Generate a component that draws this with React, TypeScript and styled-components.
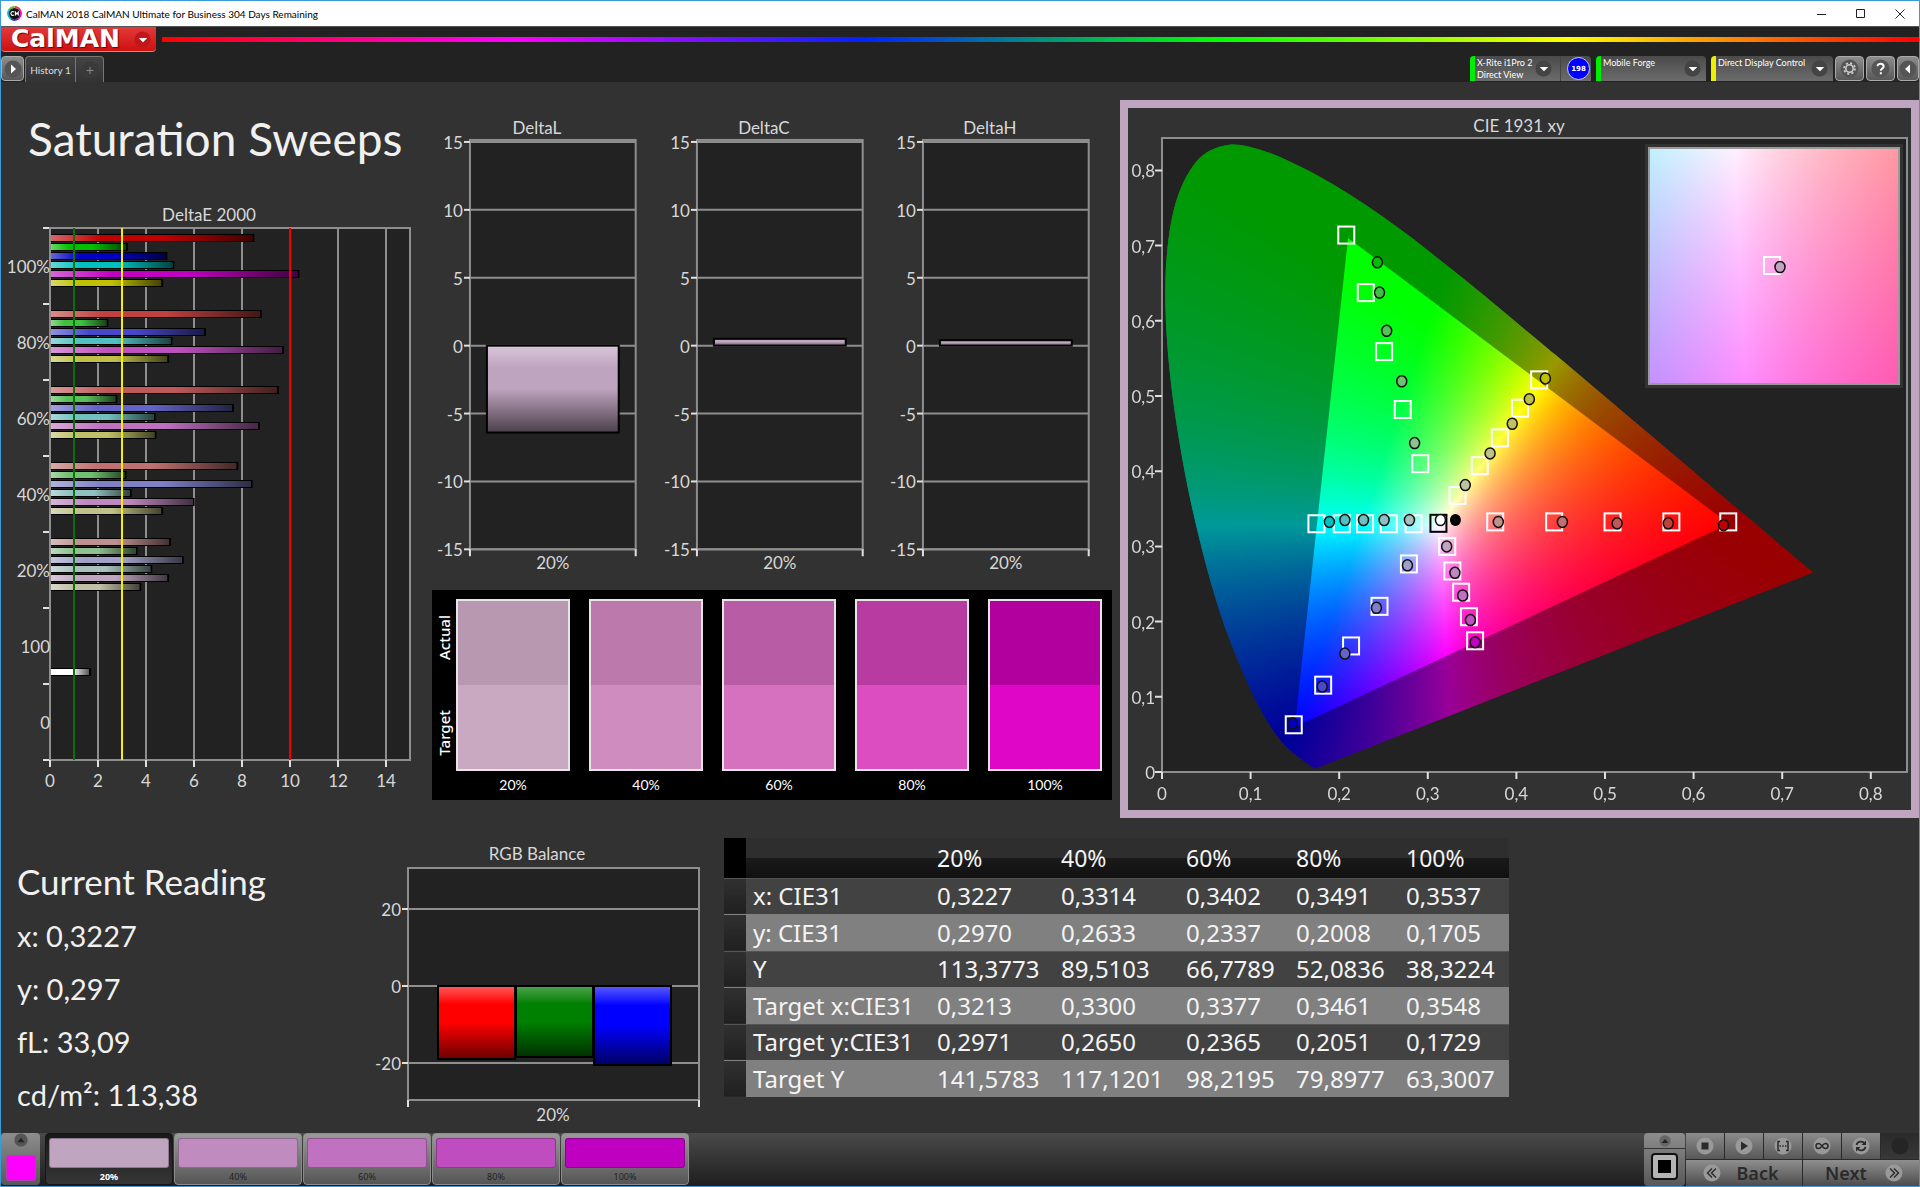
import React, { useEffect, useRef } from 'react';
import styled, { createGlobalStyle } from 'styled-components';

const GlobalStyle = createGlobalStyle`
  *, *::before, *::after { box-sizing: border-box; }
  body { margin: 0; background: #323232; }
  h1, h2, p { margin: 0; font-weight: 400; }
  button { font: inherit; color: inherit; padding: 0; border: 0; cursor: pointer; }
`;

const humanist = "Lato, 'Open Sans', sans-serif";
const ui = "'Noto Sans', 'Open Sans', sans-serif";
const panelGrey = 'linear-gradient(#8d8d8d, #585858)';

/* ---------- shell ---------- */

const Shell = styled.div`
  min-height: 100vh;
  display: flex;
  flex-direction: column;
  border: 1px solid #3a9bdc;
  background: #323232;
  color: #d9d9d9;
  font-family: ${humanist};
`;

const TitleBar = styled.header`
  display: flex;
  align-items: center;
  height: 25px;
  padding-left: 6px;
  background: #fff;
  color: #000;
  font: 10px/16px ${humanist};
`;
const AppName = styled.span`
  flex: 1;
  margin-left: 4px;
`;
const WindowButton = styled.button`
  display: grid;
  place-items: center;
  width: 39px;
  height: 24px;
  background: none;
`;

const TopBar = styled.div`
  background: #222;
  border-top: 1px solid #555;
`;
const BrandRow = styled.div`
  display: flex;
  align-items: flex-start;
  height: 29px;
`;
const Brand = styled.button`
  display: flex;
  align-items: center;
  justify-content: space-between;
  width: 155px;
  height: 25px;
  padding: 0 5px 0 10px;
  border-bottom: 1px solid #a99;
  border-radius: 0 0 4px 4px;
  background: linear-gradient(#e23a3a, #cf1010);
  color: #fff;
  font: 700 25px/24px 'DejaVu Sans', sans-serif;
  text-shadow: 1px 1px 1px #700;
`;
const Rainbow = styled.div`
  flex: 1;
  height: 5px;
  margin: 10px 0 0 6px;
  background: linear-gradient(90deg, #f00, #f0f, #02f, #0f0, #ff0, #f00);
`;

const TabRow = styled.nav`
  display: flex;
  align-items: flex-start;
  height: 26px;
`;
const SquareButton = styled.button<{ $w: number }>`
  display: grid;
  place-items: center;
  width: ${p => p.$w}px;
  height: 25px;
  border: 1px solid #aaa;
  border-radius: 4px;
  background: ${panelGrey};
  color: #fff;
`;
const Tabs = styled.div`
  display: flex;
  height: 26px;
  margin-left: 1px;
  border: 1px solid #777;
  border-bottom: 0;
  border-radius: 4px 4px 0 0;
  background: linear-gradient(#444, #333);
`;
const Tab = styled.button`
  width: 50px;
  height: 25px;
  border-right: 1px solid #777;
  background: none;
  color: #ddd;
  font: 10px/16px ${humanist};
  white-space: nowrap;
`;
const AddTab = styled(Tab)`
  display: grid;
  place-items: center;
  width: 27px;
  border-right: 0;
`;
const Spacer = styled.div`
  flex: 1;
`;
const Device = styled.button<{ $lamp: string; $w: number }>`
  display: flex;
  align-items: flex-start;
  justify-content: space-between;
  width: ${p => p.$w}px;
  height: 25px;
  margin-right: 5px;
  padding: 0 5px 0 2px;
  border-left: 5px solid ${p => p.$lamp};
  border-radius: 4px 4px 0 0;
  background: linear-gradient(#4a4a4a, #6c6c6c);
  color: #fff;
  text-align: left;
  font: 9px/12px ${humanist};
  white-space: nowrap;
`;
const DeviceName = styled.span`
  padding-top: 1px;
`;
const Arrow = styled.span`
  display: grid;
  align-self: center;
`;
const MeterGroup = styled.div`
  display: flex;
  margin-right: 5px;
  border-radius: 4px 4px 0 0;
  background: linear-gradient(#4a4a4a, #6c6c6c);
`;
const MeterDevice = styled(Device)`
  margin: 0;
  padding-right: 8px;
  border-right: 1px solid #444;
  border-radius: 4px 0 0 0;
`;
const Badge = styled.span`
  display: grid;
  place-items: center;
  width: 23px;
  height: 23px;
  margin: 1px 1px 0 6px;
  border: 1px solid #ccd;
  border-radius: 50%;
  background: #00f;
  color: #fff;
  font: 700 7px/10px 'DejaVu Sans', sans-serif;
`;
const Tools = styled.div`
  display: flex;
  gap: 2px;
  margin-left: -3px;
`;

/* ---------- workspace ---------- */

const Workspace = styled.main`
  flex: 1;
`;
const TopGrid = styled.section`
  display: grid;
  grid-template-columns: minmax(0, 431fr) minmax(0, 688fr) minmax(0, 799fr);
  align-items: start;
`;
const Heading = styled.h1`
  padding: 24px 0 0 27px;
  font: 46px/66px ${humanist};
  color: #f0f0f0;
  white-space: nowrap;
`;
const SweepColumn = styled.div`
  display: flex;
  flex-direction: column;
  gap: 28px;
`;
const MiddleColumn = styled.div`
  padding: 31px 8px 0 0;
`;
const DeltaGrid = styled.div`
  display: grid;
  grid-template-columns: repeat(3, 1fr);
`;
const Chart = styled.svg`
  display: block;
  width: 100%;
  height: auto;
  font-family: ${humanist};
  font-size: 17px;
  fill: #d8d8d8;
`;

const SwatchPanel = styled.div`
  display: grid;
  grid-template-columns: 24px 1fr;
  height: 210px;
  margin-top: 10px;
  padding-top: 9px;
  background: #000;
  color: #fff;
`;
const SideLabels = styled.div`
  display: grid;
  grid-template-rows: 76px 116px;
  justify-items: center;
  align-items: center;
  font: 500 15px/20px ${ui};
`;
const SideLabel = styled.span`
  writing-mode: vertical-rl;
  transform: rotate(180deg);
`;
const Swatches = styled.div`
  display: grid;
  grid-template-columns: repeat(5, 1fr);
  gap: 19px;
  padding-right: 10px;
`;
const SwatchItem = styled.div`
  display: flex;
  flex-direction: column;
  align-items: center;
  gap: 4px;
  font-size: 14px;
  line-height: 20px;
`;
const SwatchPair = styled.div<{ $actual: string; $target: string }>`
  width: 100%;
  height: 172px;
  border: 2px solid #e8e4e8;
  background: linear-gradient(${p => p.$actual} 50%, ${p => p.$target} 50%);
`;

const CiePanel = styled.div`
  margin-top: 18px;
  border: 8px solid #c0a5c0;
`;
const FieldCanvas = styled.canvas`
  display: block;
`;

const BottomGrid = styled.section`
  display: grid;
  grid-template-columns: 369fr 353fr 1196fr;
  align-items: start;
`;
const Reading = styled.div`
  padding: 35px 0 0 16px;
  color: #f0f0f0;
  white-space: nowrap;
`;
const ReadingTitle = styled.h2`
  font-size: 35px;
  line-height: 56px;
`;
const ReadingLine = styled.p`
  padding-top: 1px;
  font-size: 29px;
  line-height: 52px;
`;
const RgbBox = styled.div`
  padding: 26px 22px 0 0;
`;
const TableBox = styled.div`
  padding: 20px 0 0 1px;
`;
const DataTable = styled.table`
  width: 785px;
  border-collapse: collapse;
  table-layout: fixed;
  color: #f4f4f4;
  font: 24px/28px ${ui};
  text-align: left;
`;
const HeadRow = styled.tr`
  height: 40px;
  background: linear-gradient(#2e2e2e 50%, #1a1a1a 50%, #111);
`;
const BodyRow = styled.tr<{ $alt: boolean }>`
  height: ${p => (p.$alt ? 37 : 36)}px;
  border-top: 1px solid ${p => (p.$alt ? '#808080' : '#555')};
  background: ${p => (p.$alt ? '#808080' : '#424242')};
`;
const HeadCell = styled.th`
  padding: 0 0 0 7px;
  font-size: 23px;
  font-weight: 400;
`;
const Corner = styled.th`
  padding: 0;
  background: #000;
`;
const Grip = styled.td`
  padding: 0;
  background: linear-gradient(#303030, #202020);
`;
const Cell = styled.td`
  padding: 0 0 0 7px;
  white-space: nowrap;
`;

/* ---------- bottom bar ---------- */

const BottomBar = styled.footer`
  display: flex;
  height: 53px;
  background: linear-gradient(#4a4a4a, #1e1e1e);
`;
const ColorPicker = styled.button`
  display: flex;
  flex-direction: column;
  align-items: center;
  gap: 8px;
  width: 39px;
  height: 52px;
  margin-right: 5px;
  border-radius: 4px;
  background: ${panelGrey};
`;
const PickedColor = styled.span`
  width: 30px;
  height: 26px;
  border: 1px solid #a4a;
  border-radius: 3px;
  background: #f0f;
`;
const Steps = styled.div`
  display: flex;
  gap: 1px;
`;
const Step = styled.button<{ $active: boolean }>`
  display: flex;
  flex-direction: column;
  align-items: center;
  gap: 2px;
  width: 128px;
  height: 52px;
  padding-top: 4px;
  border: 1px solid ${p => (p.$active ? '#161616' : '#8c8c8c')};
  border-radius: 4px;
  background: ${p => (p.$active ? 'linear-gradient(#181818, #363636)' : 'linear-gradient(#9a9a9a, #555)')};
  color: ${p => (p.$active ? '#fff' : '#222')};
  font: ${p => (p.$active ? 700 : 400)} 9px/14px ${ui};
`;
const StepColor = styled.span<{ $c: string }>`
  width: 120px;
  height: 31px;
  border: 1px solid #0004;
  border-radius: 3px;
  background: ${p => p.$c};
`;
const PatternBox = styled.div`
  display: flex;
  flex-direction: column;
  width: 41px;
  margin-right: 1px;
  border-radius: 4px;
  overflow: hidden;
  background: ${panelGrey};
`;
const PatternToggle = styled.button`
  display: grid;
  place-items: center;
  height: 16px;
  border-bottom: 1px solid #333;
  background: none;
`;
const PatternButton = styled.button`
  display: grid;
  place-items: center;
  width: 27px;
  height: 27px;
  margin: 4px auto 0;
  border: 2px solid #111;
  border-radius: 4px;
  background: #b4b4b4;
`;
const Transport = styled.div`
  display: grid;
  grid-template-columns: repeat(6, 38px);
  grid-template-rows: 26px 26px;
  gap: 1px;
  background: #2a2a2a;
`;
const TransportButton = styled.button`
  display: grid;
  place-items: center;
  background: linear-gradient(#8c8c8c, #585858);
  &:disabled { background: linear-gradient(#2a2a2a, #383838); }
`;
const NavButton = styled.button`
  grid-column: span 3;
  display: flex;
  align-items: center;
  justify-content: center;
  gap: 15px;
  padding-right: 6px;
  background: linear-gradient(#8f8f8f, #4c4c4c);
  color: #2a2a2a;
  font: 600 18px/24px ${ui};
`;
const NextButton = styled(NavButton)`
  gap: 18px;
  padding: 0 0 0 6px;
`;

/* ---------- small icons ---------- */

const Disc = ({ size = 18, fill = '#555', children }: { size?: number; fill?: string; children?: React.ReactNode }) => (
  <svg width={size} height={size} viewBox="0 0 18 18" aria-hidden="true">
    <circle cx="9" cy="9" r="8.5" fill={fill} />
    {children}
  </svg>
);
const DownArrow = ({ fill = '#444' }: { fill?: string }) => (
  <Arrow><Disc size={17} fill={fill}><path d="M5 7.5h9L9.5 12z" fill="#fff" /></Disc></Arrow>
);

/* ---------- data ---------- */

const names = ['red', 'green', 'blue', 'cyan', 'magenta', 'yellow'];
const shades: Record<string, string[]> = {
  '100%': ['#c00000', '#00c000', '#0000c0', '#00c0c0', '#c000c0', '#c0c000'],
  '80%': ['#c04040', '#40c040', '#4848c8', '#50c0c0', '#c050c0', '#c0c048'],
  '60%': ['#c05858', '#58c058', '#6464c8', '#70c0c0', '#c070c0', '#c0c068'],
  '40%': ['#c07070', '#70c070', '#8080c8', '#90c0c0', '#c088c0', '#c0c088'],
  '20%': ['#c09090', '#90c090', '#a0a0c8', '#a8c0c0', '#c0a5c0', '#c0c0a4'],
};
const deltaE: { label: string; values: number[] }[] = [
  { label: '100%', values: [8.47, 3.2, 4.85, 5.14, 10.35, 4.67] },
  { label: '80%', values: [8.78, 2.39, 6.45, 5.06, 9.71, 4.92] },
  { label: '60%', values: [9.5, 2.76, 7.62, 4.36, 8.7, 4.39] },
  { label: '40%', values: [7.8, 3.14, 8.4, 3.36, 5.98, 4.67] },
  { label: '20%', values: [5, 3.61, 5.53, 4.22, 4.92, 3.76] },
  { label: '100', values: [] },
  { label: '0', values: [] },
];

type XY = [number, number];
const levels = ['100%', '80%', '60%', '40%', '20%'];
const targets: Record<string, XY[]> = {
  green: [[0.208, 0.714], [0.23, 0.6375], [0.2507, 0.559], [0.2717, 0.482], [0.2915, 0.41]],
  yellow: [[0.4257, 0.5215], [0.4041, 0.4838], [0.3813, 0.4443], [0.3586, 0.4073], [0.3335, 0.3677]],
  cyan: [[0.1743, 0.3301], [0.2029, 0.3301], [0.2292, 0.3301], [0.256, 0.3301], [0.284, 0.3301]],
  red: [[0.6391, 0.3326], [0.5749, 0.3326], [0.5085, 0.3326], [0.4426, 0.3326], [0.3761, 0.3326]],
  magenta: [[0.3534, 0.1745], [0.3464, 0.2065], [0.3376, 0.2391], [0.3277, 0.2673], [0.3219, 0.3]],
  blue: [[0.1487, 0.0628], [0.1819, 0.1155], [0.2134, 0.1676], [0.2455, 0.2203], [0.2787, 0.2767]],
};
const actuals: Record<string, XY[]> = {
  green: [[0.2431, 0.6777], [0.2455, 0.6375], [0.2536, 0.5867], [0.2706, 0.5196], [0.2851, 0.4374]],
  yellow: [[0.4327, 0.5234], [0.4146, 0.4958], [0.3953, 0.4631], [0.3703, 0.4236], [0.3423, 0.3815]],
  cyan: [[0.1889, 0.3326], [0.2064, 0.3351], [0.2274, 0.3351], [0.2507, 0.3351], [0.2793, 0.3351]],
  red: [[0.6338, 0.3282], [0.5714, 0.3307], [0.5137, 0.3307], [0.4519, 0.3326], [0.3796, 0.3326]],
  magenta: [[0.3534, 0.1726], [0.3481, 0.2021], [0.3394, 0.2347], [0.3306, 0.2648], [0.3213, 0.3]],
  blue: [[0.1475, 0.0646], [0.1808, 0.1136], [0.2064, 0.1575], [0.242, 0.2184], [0.277, 0.2749]],
};

const locus: XY[] = [
  [0.1741, 0.005], [0.1726, 0.0048], [0.1714, 0.0051], [0.1689, 0.0069], [0.1644, 0.0109], [0.1566, 0.0177],
  [0.151, 0.0227], [0.144, 0.0297], [0.1355, 0.0399], [0.1241, 0.0578], [0.1096, 0.0868], [0.0913, 0.1327],
  [0.0687, 0.2007], [0.0454, 0.295], [0.0235, 0.4127], [0.0082, 0.5384], [0.0039, 0.6548], [0.0139, 0.7502],
  [0.0389, 0.812], [0.0743, 0.8338], [0.1142, 0.8262], [0.1547, 0.8059], [0.1929, 0.7816], [0.2296, 0.7543],
  [0.2658, 0.7243], [0.3016, 0.6923], [0.3373, 0.6589], [0.3731, 0.6245], [0.4441, 0.5547], [0.5125, 0.4866],
  [0.5752, 0.4242], [0.627, 0.3725], [0.6658, 0.334], [0.6915, 0.3083], [0.719, 0.2809], [0.7347, 0.2653],
];
const gamut: XY[] = [[0.64, 0.33], [0.21, 0.71], [0.15, 0.06]];

const table = {
  columns: ['20%', '40%', '60%', '80%', '100%'],
  rows: [
    ['x: CIE31', '0,3227', '0,3314', '0,3402', '0,3491', '0,3537'],
    ['y: CIE31', '0,2970', '0,2633', '0,2337', '0,2008', '0,1705'],
    ['Y', '113,3773', '89,5103', '66,7789', '52,0836', '38,3224'],
    ['Target x:CIE31', '0,3213', '0,3300', '0,3377', '0,3461', '0,3548'],
    ['Target y:CIE31', '0,2971', '0,2650', '0,2365', '0,2051', '0,1729'],
    ['Target Y', '141,5783', '117,1201', '98,2195', '79,8977', '63,3007'],
  ],
};

const swatches = [
  { label: '20%', actual: '#b897b0', target: '#c9a8c1' },
  { label: '40%', actual: '#bb7aab', target: '#cf8cbf' },
  { label: '60%', actual: '#b75ca5', target: '#d671c0' },
  { label: '80%', actual: '#b83ba1', target: '#dc4dc2' },
  { label: '100%', actual: '#b2009e', target: '#e006c8' },
];
const steps = [
  { label: '20%', color: '#c0a5c0' },
  { label: '40%', color: '#c08cc0' },
  { label: '60%', color: '#c071c0' },
  { label: '80%', color: '#c04dc0' },
  { label: '100%', color: '#c000c0' },
];

/* ---------- charts ---------- */

const line = '#8e8e8e';
const tick = '#e0e0e0';

function DeltaEChart() {
  const left = 49, top = 28, unit = 24, group = 76, pitch = 9;
  const right = left + unit * 15, bottom = top + group * 7;
  const x = (v: number) => left + v * unit;
  return (
    <Chart viewBox="0 0 431 600" role="img" aria-label="DeltaE 2000">
      <defs>
        <linearGradient id="barShade">
          <stop offset="0" stopColor="#fff" stopOpacity="0.4" />
          <stop offset="0.25" stopColor="#fff" stopOpacity="0" />
          <stop offset="0.55" stopColor="#000" stopOpacity="0" />
          <stop offset="1" stopColor="#000" stopOpacity="0.65" />
        </linearGradient>
      </defs>
      <text x="208" y="21" textAnchor="middle">DeltaE 2000</text>
      <rect x={left} y={top} width={right - left} height={bottom - top} fill="#222" stroke={line} strokeWidth="2" />
      {[2, 4, 6, 8, 10, 12, 14].map(v => <path key={v} d={`M${x(v)} ${top}V${bottom}`} stroke={line} strokeWidth="2" />)}
      {[0, 2, 4, 6, 8, 10, 12, 14].map(v => (
        <g key={v}>
          <path d={`M${x(v)} ${bottom}v7`} stroke={tick} strokeWidth="2" />
          <text x={x(v)} y={bottom + 27} textAnchor="middle">{v}</text>
        </g>
      ))}
      {[0, 1, 2, 3, 4, 5, 6, 7].map(i => <path key={i} d={`M${left - 7} ${top + i * group}h6`} stroke={tick} strokeWidth="2" />)}
      {deltaE.map((g, gi) => (
        <g key={g.label}>
          <text x={left} y={top + gi * group + 45} textAnchor="end">{g.label}</text>
          {g.values.map((v, i) => (
            <g key={names[i]}>
              <rect x={left + 1} y={top + gi * group + 6 + i * pitch} width={v * unit} height="8" fill="#000" />
              <rect x={left + 1} y={top + gi * group + 7 + i * pitch} width={v * unit - 2} height="6" fill={shades[g.label][i]} />
              <rect x={left + 1} y={top + gi * group + 7 + i * pitch} width={v * unit - 2} height="6" fill="url(#barShade)" />
            </g>
          ))}
        </g>
      ))}
      <rect x={left + 1} y={top + 5 * group + 60} width="40" height="8" fill="#000" />
      <rect x={left + 1} y={top + 5 * group + 61} width="38" height="6" fill="#fff" />
      <rect x={left + 1} y={top + 5 * group + 61} width="38" height="6" fill="url(#barShade)" />
      <path d={`M${x(1)} ${top}V${bottom}`} stroke="#0a6e0a" strokeWidth="2" />
      <path d={`M${x(3)} ${top}V${bottom}`} stroke="#f4f000" strokeWidth="2" />
      <path d={`M${x(10)} ${top}V${bottom}`} stroke="#f00000" strokeWidth="2" />
    </Chart>
  );
}

function DeltaChart({ title, value }: { title: string; value: number }) {
  const y = (v: number) => 233 - v * 13.6;
  const id = `shade-${title}`;
  const top = Math.min(y(value), y(0));
  const height = Math.abs(y(value) - y(0));
  return (
    <Chart viewBox="0 0 227 468" role="img" aria-label={title}>
      <defs>
        <linearGradient id={id} x2="0" y2="1">
          <stop offset="0" stopColor="#d8c6d8" />
          <stop offset="0.25" stopColor="#c0a5c0" />
          <stop offset="0.5" stopColor="#bda3bd" />
          <stop offset="1" stopColor="#4c404c" />
        </linearGradient>
      </defs>
      <text x="105" y="21" textAnchor="middle">{title}</text>
      <rect x="38" y="27" width="166" height="410" fill="#222" stroke={line} strokeWidth="2" />
      {[15, 10, 5, 0, -5, -10, -15].map(v => (
        <g key={v}>
          <path d={`M38 ${y(v)}H204`} stroke={line} strokeWidth="2" />
          <path d={`M32 ${y(v)}h6`} stroke={tick} strokeWidth="2" />
          <text x="31" y={y(v) + 7} textAnchor="end">{v}</text>
        </g>
      ))}
      <path d="M38 437v7M204 437v7" stroke={tick} strokeWidth="2" />
      <rect x="55" y={top} width="132" height={height} fill={`url(#${id})`} stroke="#000" strokeWidth="2" />
      <text x="121" y="457" textAnchor="middle">20%</text>
    </Chart>
  );
}

function RgbChart() {
  const bars: [string, string, string, number][] = [
    ['#ff5c5c', '#ff0000', '#6a0000', 73],
    ['#4fa34f', '#008000', '#003000', 71],
    ['#5c5cff', '#0000ff', '#000060', 79],
  ];
  return (
    <Chart viewBox="0 -10 331 286" role="img" aria-label="RGB Balance">
      <defs>
        {bars.map(([a, b, c], i) => (
          <linearGradient key={i} id={`rgb${i}`} x2="0" y2="1">
            <stop offset="0" stopColor={a} />
            <stop offset="0.25" stopColor={b} />
            <stop offset="0.5" stopColor={b} />
            <stop offset="1" stopColor={c} />
          </linearGradient>
        ))}
      </defs>
      <text x="167" y="6" textAnchor="middle">RGB Balance</text>
      <rect x="38" y="14" width="291" height="232" fill="#222" stroke={line} strokeWidth="2" />
      {[20, 0, -20].map(v => (
        <g key={v}>
          <path d={`M38 ${132 - v * 3.85}H329`} stroke={line} strokeWidth="2" />
          <path d={`M32 ${132 - v * 3.85}h6`} stroke={tick} strokeWidth="2" />
          <text x="31" y={139 - v * 3.85} textAnchor="end">{v}</text>
        </g>
      ))}
      <path d="M38 246v7M329 246v7" stroke={tick} strokeWidth="2" />
      {bars.map((b, i) => (
        <rect key={i} x={68 + i * 78} y="132" width="77" height={b[3]} fill={`url(#rgb${i})`} stroke="#000" strokeWidth="2" />
      ))}
      <text x="183" y="267" textAnchor="middle">20%</text>
    </Chart>
  );
}

/* Colour of a chromaticity, scaled so its brightest channel is full. */
function chroma(x: number, y: number): [number, number, number] {
  const z = 1 - x - y;
  const rgb = [
    3.2406 * x - 1.5372 * y - 0.4986 * z,
    -0.9689 * x + 1.8758 * y + 0.0415 * z,
    0.0557 * x - 0.204 * y + 1.057 * z,
  ].map(v => Math.max(0, v));
  const m = Math.max(...rgb) || 1;
  return [(rgb[0] / m) * 255, (rgb[1] / m) * 255, (rgb[2] / m) * 255];
}

function field(w: number, h: number, at: (px: number, py: number) => XY) {
  const c = document.createElement('canvas');
  c.width = w;
  c.height = h;
  const ctx = c.getContext('2d')!;
  const img = ctx.createImageData(w, h);
  for (let j = 0; j < h; j++) {
    for (let i = 0; i < w; i++) {
      const [x, y] = at(i, j);
      const rgb = chroma(x, y);
      const k = (j * w + i) * 4;
      img.data[k] = rgb[0];
      img.data[k + 1] = rgb[1];
      img.data[k + 2] = rgb[2];
      img.data[k + 3] = 255;
    }
  }
  ctx.putImageData(img, 0, 0);
  return c;
}

const SX = 886, SY = 752, PW = 745, PH = 634;

function GamutField() {
  const ref = useRef<HTMLCanvasElement>(null);
  useEffect(() => {
    const ctx = ref.current!.getContext('2d')!;
    const colors = field(PW, PH, (i, j) => [i / SX, Math.max((PH - j) / SY, 0.0001)]);
    const trace = (pts: XY[]) => {
      ctx.beginPath();
      pts.forEach(([x, y]) => ctx.lineTo(x * SX, PH - y * SY));
      ctx.closePath();
    };
    const smooth = (pts: XY[]) => {
      const p = pts.map(([x, y]) => [x * SX, PH - y * SY]);
      ctx.beginPath();
      ctx.moveTo(p[0][0], p[0][1]);
      for (let i = 0; i < p.length - 1; i++) {
        const a = p[Math.max(0, i - 1)], b = p[i], c = p[i + 1], d = p[Math.min(p.length - 1, i + 2)];
        ctx.bezierCurveTo(
          b[0] + (c[0] - a[0]) / 6, b[1] + (c[1] - a[1]) / 6,
          c[0] - (d[0] - b[0]) / 6, c[1] - (d[1] - b[1]) / 6,
          c[0], c[1],
        );
      }
      ctx.closePath();
    };
    ctx.clearRect(0, 0, PW, PH);
    ctx.save();
    smooth(locus);
    ctx.clip();
    ctx.drawImage(colors, 0, 0);
    ctx.fillStyle = 'rgba(0,0,0,0.4)';
    ctx.fillRect(0, 0, PW, PH);
    ctx.restore();
    ctx.save();
    trace(gamut);
    ctx.clip();
    ctx.drawImage(colors, 0, 0);
    ctx.restore();
  }, []);
  return <FieldCanvas ref={ref} width={PW} height={PH} />;
}

function InsetField() {
  const ref = useRef<HTMLCanvasElement>(null);
  useEffect(() => {
    const ctx = ref.current!.getContext('2d')!;
    ctx.drawImage(field(252, 238, (i, j) => [0.3213 + (i - 124) * 0.00022, 0.2971 - (j - 118) * 0.00022]), 0, 0);
  }, []);
  return <FieldCanvas ref={ref} width={252} height={238} />;
}

function CieChart() {
  const px = (x: number) => 34 + x * SX;
  const py = (y: number) => 664 - y * SY;
  const marks = [0, 1, 2, 3, 4, 5, 6, 7, 8];
  const label = (i: number) => (i ? `0,${i}` : '0');
  return (
    <Chart viewBox="0 0 783 702" role="img" aria-label="CIE 1931 xy">
      <text x="391" y="24" textAnchor="middle">CIE 1931 xy</text>
      <rect x="34" y="30" width={PW} height={PH} fill="#222" />
      <foreignObject x="34" y="30" width={PW} height={PH}><GamutField /></foreignObject>
      <rect x="34" y="30" width={PW} height={PH} fill="none" stroke={line} strokeWidth="2" />
      {marks.map(i => (
        <g key={i}>
          <path d={`M27 ${py(i / 10)}h7M${px(i / 10)} 664v7`} stroke={tick} strokeWidth="2" />
          <text x="27" y={py(i / 10) + 7} textAnchor="end">{label(i)}</text>
          <text x={px(i / 10)} y="692" textAnchor="middle">{label(i)}</text>
        </g>
      ))}
      {Object.entries(targets).map(([name, pts]) => pts.map(([x, y], i) => (
        <rect key={name + i} x={px(x) - 8} y={py(y) - 8.5} width="16" height="17" fill="none" stroke="#fff" strokeWidth="2" />
      )))}
      <rect x={px(0.312) - 8} y={py(0.3307) - 8.5} width="16" height="17" fill="none" stroke="#000" strokeWidth="2" />
      {Object.entries(actuals).map(([name, pts]) => pts.map(([x, y], i) => (
        <ellipse key={name + i} cx={px(x)} cy={py(y)} rx="5" ry="5.5" fill={shades[levels[i]][names.indexOf(name)]} stroke="#111" strokeWidth="1.5" />
      )))}
      <ellipse cx={px(0.3143)} cy={py(0.3351)} rx="5" ry="5.5" fill="#fff" stroke="#111" strokeWidth="1.5" />
      <ellipse cx={px(0.3312)} cy={py(0.3351)} rx="5.5" ry="6" fill="#000" />
      <rect x="517" y="36" width="258" height="244" fill="#323232" />
      <foreignObject x="520" y="39" width="252" height="238"><InsetField /></foreignObject>
      <rect x="521" y="40" width="250" height="236" fill="none" stroke="#9a9a9a" strokeWidth="2" />
      <rect x="636" y="149" width="16" height="17" fill="none" stroke="#fff" strokeWidth="2" />
      <ellipse cx="652" cy="159" rx="5" ry="5.5" fill="#c0a5c0" stroke="#111" strokeWidth="1.5" />
    </Chart>
  );
}

/* ---------- page ---------- */

export default function App() {
  return (
    <Shell>
      <GlobalStyle />
      <TitleBar>
        <svg width="15" height="15" viewBox="0 0 16 16" aria-hidden="true">
          <path d="M8 1a7 7 0 0 1 6 3.5" stroke="#f33" strokeWidth="2" fill="none" />
          <path d="M14 4.500a7 7 0 0 1-2 9" stroke="#e0c" strokeWidth="2" fill="none" />
          <path d="M12 13.500a7 7 0 0 1-8 0" stroke="#33f" strokeWidth="2" fill="none" />
          <path d="M4 13.500a7 7 0 0 1-2-9" stroke="#0bd" strokeWidth="2" fill="none" />
          <path d="M2 4.500A7 7 0 0 1 8 1" stroke="#5c2" strokeWidth="2" fill="none" />
          <circle cx="8" cy="8" r="6" fill="#111" />
          <path d="M7.500 6.500a2 2 0 1 0 0 3M9 10V6.500l1.500 2 1.500-2V10" stroke="#fff" strokeWidth="1.200" fill="none" />
        </svg>
        <AppName>CalMAN 2018 CalMAN Ultimate for Business 304 Days Remaining</AppName>
        <WindowButton aria-label="Minimize"><svg width="10" height="10"><path d="M0 5.500h9" stroke="#222" /></svg></WindowButton>
        <WindowButton aria-label="Maximize"><svg width="10" height="10"><path d="M.5.500h8v8h-8z" fill="none" stroke="#222" /></svg></WindowButton>
        <WindowButton aria-label="Close"><svg width="10" height="10"><path d="M.5.500l9 9M9.500.500l-9 9" stroke="#222" /></svg></WindowButton>
      </TitleBar>

      <TopBar>
        <BrandRow>
          <Brand>CalMAN<DownArrow fill="#c01818" /></Brand>
          <Rainbow />
        </BrandRow>
        <TabRow>
          <SquareButton $w={23} aria-label="Expand"><Disc><path d="M7 4.500v9l5-4.500z" fill="#fff" /></Disc></SquareButton>
          <Tabs>
            <Tab>History 1</Tab>
            <AddTab aria-label="Add tab"><Disc fill="#3a3a3a"><path d="M9 6v7M5.500 9.500h7" stroke="#888" /></Disc></AddTab>
          </Tabs>
          <Spacer />
          <MeterGroup>
            <MeterDevice $lamp="#0e0" $w={91}><DeviceName>X-Rite i1Pro 2<br />Direct View</DeviceName><DownArrow /></MeterDevice>
            <Badge>198</Badge>
          </MeterGroup>
          <Device $lamp="#0e0" $w={110}><DeviceName>Mobile Forge</DeviceName><DownArrow /></Device>
          <Device $lamp="#ee0" $w={122}><DeviceName>Direct Display Control</DeviceName><DownArrow /></Device>
          <Tools>
            <SquareButton $w={29} aria-label="Settings">
              <Disc size={19}>
                <circle cx="9" cy="9" r="3.500" fill="none" stroke="#ccc" strokeWidth="1.500" />
                <circle cx="9" cy="9" r="5.200" fill="none" stroke="#ccc" strokeWidth="1.600" strokeDasharray="2 2.080" />
              </Disc>
            </SquareButton>
            <SquareButton $w={29} aria-label="Help">
              <Disc size={19}><path d="M6.200 6.800C6.200 3.500 12 3.600 12 7c0 2-2.700 2-2.700 4.200M9.300 12.500v2" stroke="#fff" strokeWidth="1.900" fill="none" /></Disc>
            </SquareButton>
            <SquareButton $w={22} aria-label="Collapse"><Disc><path d="M11 4.500v9L6 9z" fill="#fff" /></Disc></SquareButton>
          </Tools>
        </TabRow>
      </TopBar>

      <Workspace>
        <TopGrid>
          <SweepColumn>
            <Heading>Saturation Sweeps</Heading>
            <DeltaEChart />
          </SweepColumn>
          <MiddleColumn>
            <DeltaGrid>
              <DeltaChart title="DeltaL" value={-6.4} />
              <DeltaChart title="DeltaC" value={0.5} />
              <DeltaChart title="DeltaH" value={0.4} />
            </DeltaGrid>
            <SwatchPanel>
              <SideLabels><SideLabel>Actual</SideLabel><SideLabel>Target</SideLabel></SideLabels>
              <Swatches>
                {swatches.map(s => (
                  <SwatchItem key={s.label}><SwatchPair $actual={s.actual} $target={s.target} />{s.label}</SwatchItem>
                ))}
              </Swatches>
            </SwatchPanel>
          </MiddleColumn>
          <CiePanel><CieChart /></CiePanel>
        </TopGrid>

        <BottomGrid>
          <Reading>
            <ReadingTitle>Current Reading</ReadingTitle>
            <ReadingLine>x: 0,3227</ReadingLine>
            <ReadingLine>y: 0,297</ReadingLine>
            <ReadingLine>fL: 33,09</ReadingLine>
            <ReadingLine>cd/m²: 113,38</ReadingLine>
          </Reading>
          <RgbBox><RgbChart /></RgbBox>
          <TableBox>
            <DataTable>
              <colgroup>
                <col width="22" /><col width="184" /><col width="124" /><col width="125" /><col width="110" /><col width="110" /><col width="110" />
              </colgroup>
              <thead>
                <HeadRow><Corner /><HeadCell />{table.columns.map(c => <HeadCell key={c} scope="col">{c}</HeadCell>)}</HeadRow>
              </thead>
              <tbody>
                {table.rows.map((r, i) => (
                  <BodyRow key={r[0]} $alt={i % 2 === 1}>
                    <Grip />
                    {r.map((v, j) => <Cell key={j}>{v}</Cell>)}
                  </BodyRow>
                ))}
              </tbody>
            </DataTable>
          </TableBox>
        </BottomGrid>
      </Workspace>

      <BottomBar>
        <ColorPicker aria-label="Pick colour">
          <Disc size={14}><path d="M4.500 12L9 6l4.500 6z" fill="#222" /></Disc>
          <PickedColor />
        </ColorPicker>
        <Steps>
          {steps.map((s, i) => (
            <Step key={s.label} $active={i === 0}><StepColor $c={s.color} />{s.label}</Step>
          ))}
        </Steps>
        <Spacer />
        <PatternBox>
          <PatternToggle aria-label="Show patterns"><Disc size={12} fill="#666"><path d="M4 12L9 6l5 6z" fill="#222" /></Disc></PatternToggle>
          <PatternButton aria-label="Pattern"><svg width="13" height="13"><rect width="13" height="13" fill="#000" /></svg></PatternButton>
        </PatternBox>
        <Transport>
          <TransportButton aria-label="Stop"><Disc fill="#999"><path d="M5.500 5.500h7v7h-7z" fill="#2a2a2a" /></Disc></TransportButton>
          <TransportButton aria-label="Play"><Disc fill="#999"><path d="M6 4.500v9l7-4.500z" fill="#2a2a2a" /></Disc></TransportButton>
          <TransportButton aria-label="Read series"><Disc fill="#999"><path d="M6 4.500H4v9h2M12 4.500h2v9h-2M5.500 9h1.500M8.300 9h1.500M11 9h1.500" stroke="#2a2a2a" strokeWidth="1.500" fill="none" /></Disc></TransportButton>
          <TransportButton aria-label="Continuous"><Disc fill="#999"><path d="M9 9C7.500 7 6.500 6.500 5.500 6.500a2.500 2.500 0 0 0 0 5C6.500 11.500 7.500 11 9 9s2.500-2.500 3.500-2.500a2.500 2.500 0 0 1 0 5C11.500 11.500 10.500 11 9 9z" stroke="#2a2a2a" strokeWidth="1.500" fill="none" /></Disc></TransportButton>
          <TransportButton aria-label="Refresh"><Disc fill="#999"><path d="M4.500 8a4.500 4.500 0 0 1 8-1.500M13.500 10a4.500 4.500 0 0 1-8 1.500" stroke="#2a2a2a" strokeWidth="1.800" fill="none" /><path d="M14 3.500v4.500H9.500zM4 14.500V10h4.500z" fill="#2a2a2a" /></Disc></TransportButton>
          <TransportButton aria-label="Record" disabled><Disc fill="#252525" /></TransportButton>
          <NavButton><Disc fill="#999"><path d="M9 4.500L4.500 9 9 13.500M13 4.500L8.500 9l4.500 4.500" stroke="#2a2a2a" strokeWidth="1.400" fill="none" /></Disc>Back</NavButton>
          <NextButton>Next<Disc fill="#999"><path d="M5 4.500L9.500 9 5 13.500M9 4.500l4.500 4.500L9 13.500" stroke="#2a2a2a" strokeWidth="1.400" fill="none" /></Disc></NextButton>
        </Transport>
      </BottomBar>
    </Shell>
  );
}
